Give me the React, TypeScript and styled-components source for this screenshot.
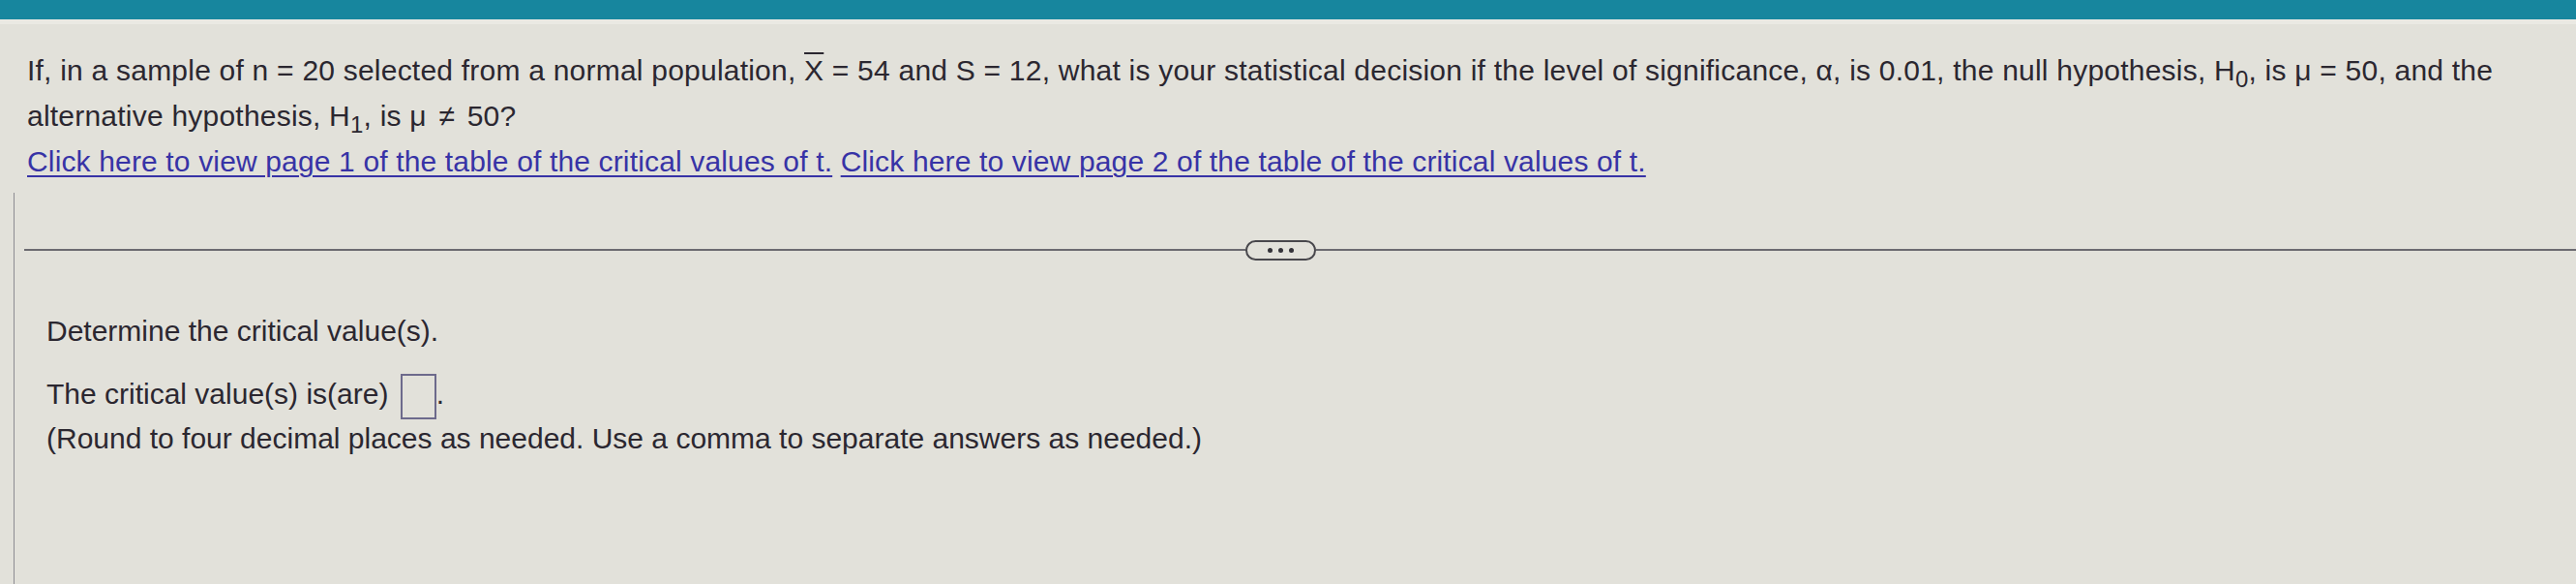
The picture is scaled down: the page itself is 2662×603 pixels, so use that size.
import styled, {createGlobalStyle} from 'styled-components'

const GlobalStyle = createGlobalStyle`
  html, body {
    margin: 0;
    padding: 0;
    background: #e2e1da;
  }
  body {
    font-family: "Liberation Sans", Arial, sans-serif;
    color: #2b2730;
  }
`

export default function App() {
  return (
    <>
      <GlobalStyle />
      <Page>
        <TopBar />
        <Question>
          <p>
            If, in a sample of n = 20 selected from a normal population, <Bar>X</Bar> = 54 and S = 12, what is your
            statistical decision if the level of significance, α, is 0.01, the null hypothesis, H<Sub>0</Sub>, is μ = 50, and
            the alternative hypothesis, H<Sub>1</Sub>, is μ <Neq>≠</Neq> 50?
          </p>
          <Links>
            <a href="#">Click here to view page 1 of the table of the critical values of t.</a>{' '}
            <a href="#">Click here to view page 2 of the table of the critical values of t.</a>
          </Links>
        </Question>
        <Divider>
          <RuleLeft />
          <More>
            <Dot /><Dot /><Dot />
          </More>
          <RuleRight />
        </Divider>
        <Answer>
          <Prompt>Determine the critical value(s).</Prompt>
          <AnswerLine>
            The critical value(s) is(are) <Box />.
          </AnswerLine>
          <Note>(Round to four decimal places as needed. Use a comma to separate answers as needed.)</Note>
        </Answer>
      </Page>
    </>
  )
}

const Page = styled.div`
  min-height: 603px;
  display: flex;
  flex-direction: column;
`

const TopBar = styled.div`
  height: 20px;
  background: #17869e;
  border-bottom: 5px solid #eae9e3;
`

const Question = styled.div`
  padding: 24px 20px 0 28px;
  font-size: 30px;
  line-height: 47px;

  p {
    margin: 0;
    letter-spacing: 0.22px;
  }
`

const Bar = styled.span`
  text-decoration: overline;
  text-decoration-thickness: 2px;
`

const Sub = styled.sub`
  font-size: 0.8em;
  line-height: 0;
  vertical-align: -0.3em;
`

const Neq = styled.span`
  margin: 0 4px;
`

const Links = styled.div`
  letter-spacing: 0.15px;

  a {
    color: #3733a6;
    text-decoration: underline;
    text-decoration-thickness: 2px;
    text-underline-offset: 4px;
  }
`

const Divider = styled.div`
  display: flex;
  align-items: center;
  margin: 57px 0 0 25px;
  height: 22px;
`

const RuleLeft = styled.div`
  flex: 0 0 1262px;
  height: 2px;
  background: #6b6a70;
`

const RuleRight = styled.div`
  flex: 1;
  height: 2px;
  background: #6b6a70;
`

const More = styled.div`
  width: 69px;
  height: 17px;
  border: 2px solid #48474c;
  border-radius: 11px;
  display: flex;
  align-items: center;
  justify-content: center;
  gap: 6px;
`

const Dot = styled.span`
  width: 5px;
  height: 5px;
  border-radius: 50%;
  background: #333238;
`

const Answer = styled.div`
  flex: 1;
  margin-left: 14px;
  margin-top: -70px;
  padding: 123px 0 0 33px;
  border-left: 1px solid #8d8c92;
  font-size: 30px;
  line-height: 40px;
`

const Prompt = styled.div``

const AnswerLine = styled.div`
  margin-top: 24px;
`

const Box = styled.span`
  display: inline-block;
  width: 33px;
  height: 43px;
  margin-left: 4px;
  border: 2px solid #6d6a8c;
  vertical-align: -16px;
`

const Note = styled.div``
